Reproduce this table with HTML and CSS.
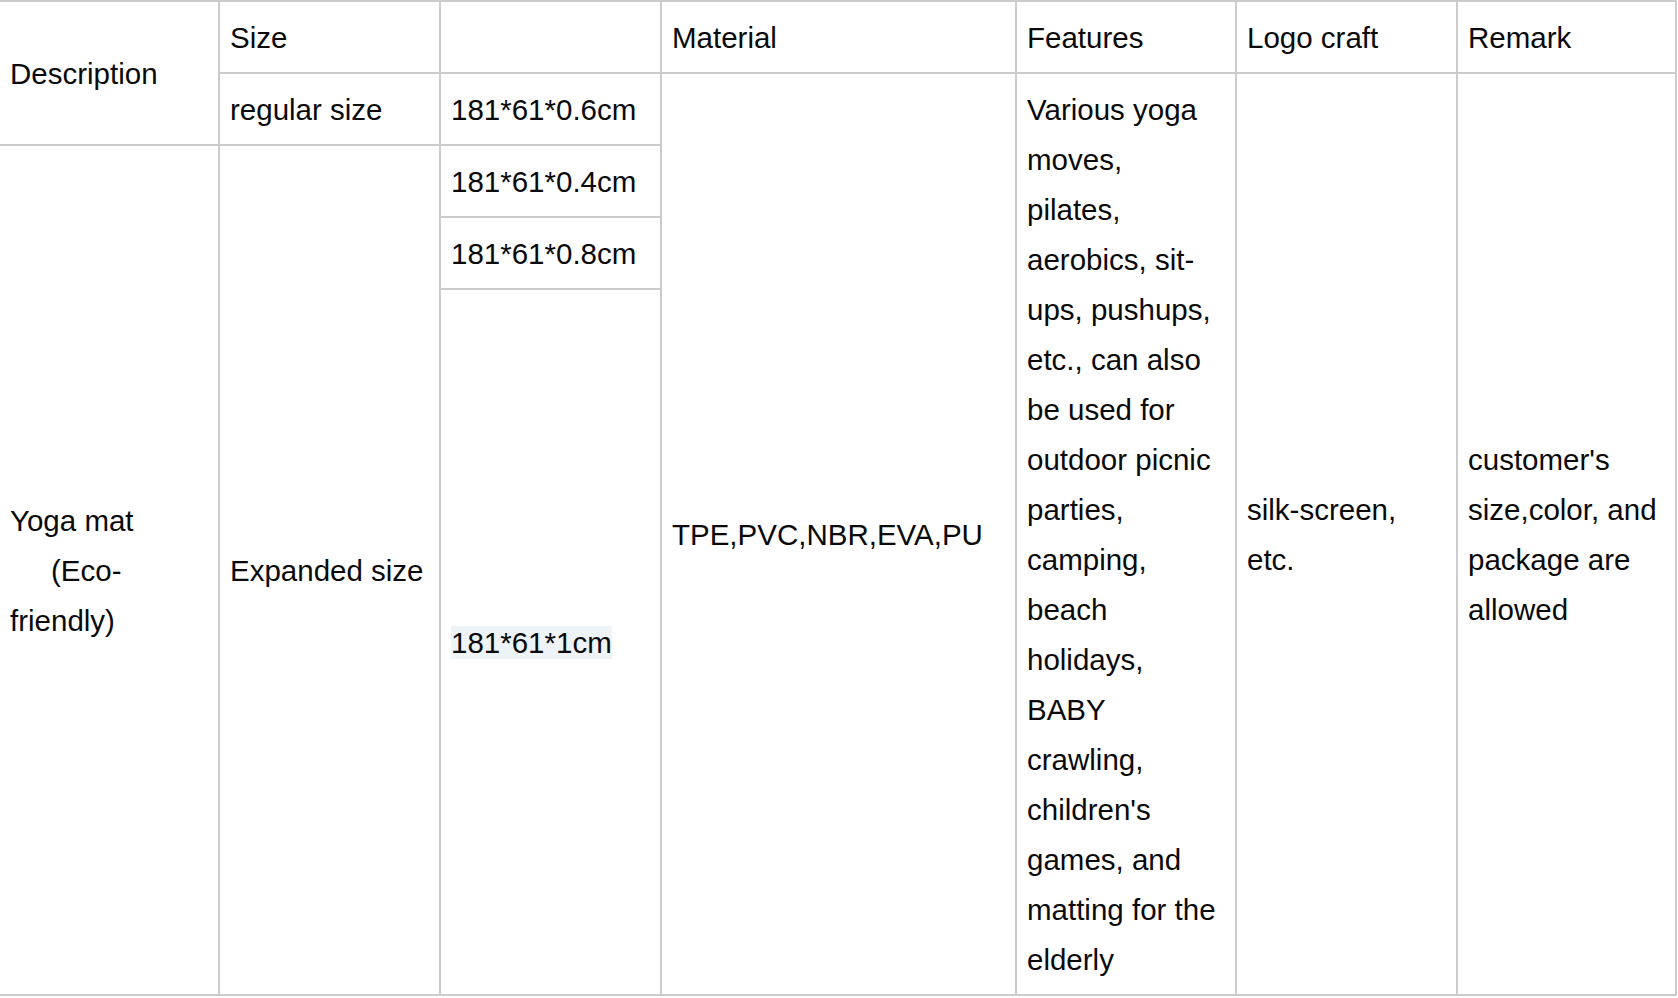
FILE: index.html
```html
<!DOCTYPE html>
<html lang="en">
<head>
<meta charset="utf-8">
<title>Yoga mat specification</title>
<link rel="stylesheet" href="styles.css">
</head>
<body>
<table class="spec">
  <colgroup>
    <col class="c1"><col class="c2"><col class="c3"><col class="c4"><col class="c5"><col class="c6"><col class="c7">
  </colgroup>
  <tbody>
    <tr>
      <td rowspan="2" class="first">Description</td>
      <td>Size</td>
      <td></td>
      <td>Material</td>
      <td>Features</td>
      <td>Logo craft</td>
      <td>Remark</td>
    </tr>
    <tr>
      <td>regular size</td>
      <td>181*61*0.6cm</td>
      <td rowspan="4">TPE,PVC,NBR,EVA,PU</td>
      <td rowspan="4">Various yoga moves, pilates, aerobics, sit-ups, pushups, etc., can also be used for outdoor picnic parties, camping, beach holidays, BABY crawling, children's games, and matting for the elderly</td>
      <td rowspan="4">silk-screen, etc.</td>
      <td rowspan="4">customer's size,color, and package are allowed</td>
    </tr>
    <tr>
      <td rowspan="3" class="first">Yoga mat &nbsp;&nbsp;&nbsp;&nbsp;&nbsp;(Eco-friendly)</td>
      <td rowspan="3">Expanded size</td>
      <td>181*61*0.4cm</td>
    </tr>
    <tr>
      <td>181*61*0.8cm</td>
    </tr>
    <tr>
      <td class="tall"><span class="hl">181*61*1cm</span></td>
    </tr>
  </tbody>
</table>
</body>
</html>
```

FILE: styles.css
```css
html, body {
  margin: 0;
  padding: 0;
  background: #ffffff;
}

body {
  font-family: "Liberation Sans", Arial, Helvetica, sans-serif;
  font-size: 29.5px;
  line-height: 50px;
  color: #0a0a0a;
}

.spec {
  table-layout: fixed;
  width: 1677px;
  border-collapse: separate;
  border-spacing: 0;
  border-top: 2px solid #cccccc;
}

.c1 { width: 220px; }
.c2 { width: 221px; }
.c3 { width: 221px; }
.c4 { width: 355px; }
.c5 { width: 220px; }
.c6 { width: 221px; }
.c7 { width: 219px; }

.spec td {
  box-sizing: border-box;
  padding: 11px 13px 9px 10px;
  border-right: 2px solid #cccccc;
  border-bottom: 2px solid #cccccc;
  vertical-align: middle;
  text-align: left;
  font-weight: normal;
  height: 72px;
}

.spec td.tall {
  height: 706px;
}

.hl {
  background: #eef3f8;
}
```
